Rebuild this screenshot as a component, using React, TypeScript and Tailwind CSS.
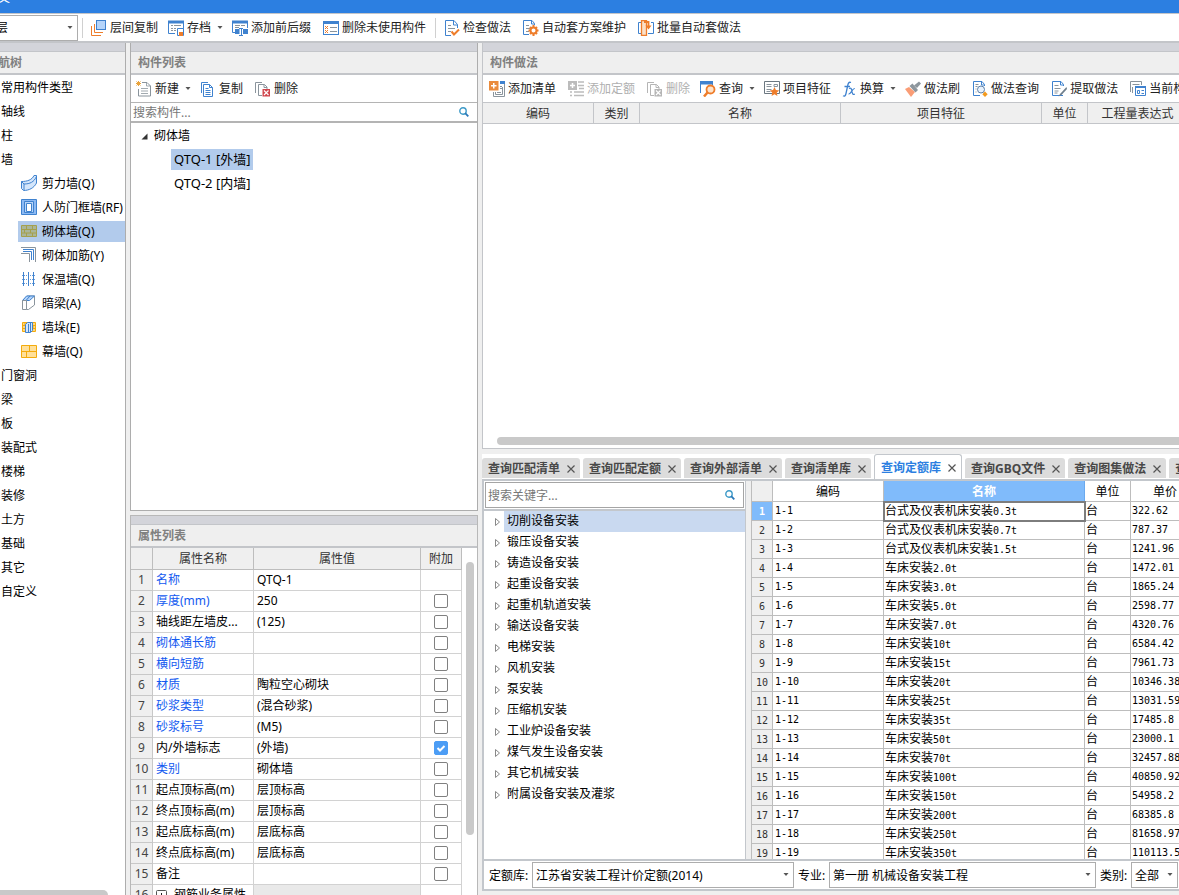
import { useState } from 'react';
import type { ReactNode } from 'react';

const BLUE = '#3f82cf';
const ORANGE = '#ee7d2b';
const GRAY = '#8a949c';

interface IconProps {
  children: ReactNode;
}

function Icon({ children }: IconProps) {
  return (
    <svg width="16" height="16" viewBox="0 0 16 16" fill="none" className="shrink-0" aria-hidden="true">
      {children}
    </svg>
  );
}

// Icones de la barre principale
const floorCopyIcon = (
  <Icon>
    <path d="M0.5 6v9.5H10M3.5 4v8.5H12" stroke={ORANGE} />
    <rect x="5.5" y="0.5" width="9" height="9" fill="#b5d4fa" stroke={BLUE} />
  </Icon>
);
const archiveIcon = (
  <Icon>
    <path d="M0.5 1v12.500H7M15.5 1v8" stroke={BLUE} />
    <path d="M0 0.500h16v3H0z" fill={BLUE} />
    <path d="M3 5.500h2M6 5.500h7M3 8.500h2M6 8.500h2M3 10.500h2M6 10.500h2" stroke={GRAY} />
    <path d="M9.500 8.500h6v7h-6z" fill="#fff" stroke={BLUE} />
    <path d="M11 12h4v4h-4z" fill={ORANGE} />
  </Icon>
);
const prefixIcon = (
  <Icon>
    <path d="M0.500 1v11.500H3M15.500 1v7" stroke={BLUE} />
    <path d="M0 0.500h15.900v3H0z" fill={BLUE} />
    <path d="M3 5.500h5M9 5.500h4M3 7.500h4" stroke={GRAY} />
    <path d="M3 9h4.500v5H3zM11 9h5v5h-5z" fill={BLUE} />
    <path d="M7 8.500h4M7 15.500h4M9.500 8v8" stroke={BLUE} />
  </Icon>
);
const unusedIcon = (
  <Icon>
    <rect x="0.500" y="1.500" width="15" height="13" fill="#fff" stroke={BLUE} />
    <path d="M0 1h16v3H0z" fill={BLUE} />
    <path d="M2 6l3 3M5 6l-3 3M2 10l3 3M5 10l-3 3" stroke={ORANGE} />
    <path d="M7 7.500h7M7 11.500h7" stroke={GRAY} />
  </Icon>
);
const checkDocIcon = (
  <Icon>
    <path d="M13.500 8V4.500L10 0.500H1.500v15H7M9.500 1v4h4" stroke={BLUE} />
    <path d="M4 5.500h3M4 8.500h7M4 11.500h3" stroke={GRAY} />
    <path d="M7.500 11.500l2.500 3 5-5" stroke={ORANGE} strokeWidth="2" />
  </Icon>
);
const schemeIcon = (
  <Icon>
    <path d="M11.500 5V3.500L9 0.500H0.500v14H6M8.500 1v3h3" stroke={BLUE} />
    <path d="M3 5.500h3M3 8.500h4M3 11.500h3" stroke={GRAY} />
    <circle cx="10.500" cy="10.500" r="3" stroke={ORANGE} strokeWidth="2" />
    <path d="M10.500 5v2M10.500 14v2M5.500 10.500h2M13.500 10.500h2M7 7l1 1M14 7l-1 1M7 14l1-1M14 14l-1-1" stroke={ORANGE} strokeWidth="2" />
  </Icon>
);
const batchIcon = (
  <Icon>
    <path d="M3 2.500H0.500v11H3M13 2.500h2.500v11H10" stroke={BLUE} />
    <path d="M3.500 0.500h5v15h-5z" fill="#fbe0c8" stroke={ORANGE} strokeWidth="1.300" />
    <path d="M6 2h4.500v4" stroke={ORANGE} strokeWidth="1.800" />
    <path d="M7.500 5.500h6l-3 4z" fill={ORANGE} />
  </Icon>
);

// Icones de la liste des composants
const newIcon = (
  <Icon>
    <path d="M6 1.500h5L14.500 5v10h-12V8" stroke={GRAY} />
    <path d="M10.500 1.500V5h4M5 7.500h7M5 10h7M5 12.500h7" stroke={GRAY} strokeWidth="0.800" />
    <path d="M2.500 0v5M0 2.500h5M0.500 0.500l4 4M4.500 0.500l-4 4" stroke="#e9a33b" />
  </Icon>
);
const copyIcon = (
  <Icon>
    <path d="M1.500 12V1.500H8" stroke={BLUE} />
    <path d="M3.500 3.500h6l3 3v9h-9z" fill="#fff" stroke={BLUE} />
    <path d="M9.500 3.500v3h3M5.500 7.500h3M5.500 9.500h5M5.500 11.500h5M5.500 13.500h5" stroke={BLUE} />
  </Icon>
);

function DeleteIcon({ color, cross }: { color: string; cross: string }) {
  return (
    <Icon>
      <path d="M0.500 12V1.500H7M7 14.500H3.500v-11h6L12 6v2" stroke={color} />
      <path d="M9 3.500v3h3" stroke={color} />
      <path d="M7.500 8H15v7.500H7.500z" fill={cross} />
      <path d="M9 9.500l4.500 4.500M13.500 9.500L9 14" stroke="#fff" strokeWidth="1.200" />
    </Icon>
  );
}

// Icones de la barre des ouvrages
const addListIcon = (
  <Icon>
    <path d="M11 0h5v3h-5z" fill={BLUE} />
    <path d="M15.500 3v12.500H4.500V11M6.500 11v2.500h7V6" stroke={GRAY} />
    <path d="M11 5.500h2M11 7.500h2M8 11.500h4" stroke={GRAY} />
    <path d="M0 0h9.500v9.500H0z" fill="#ea8b3c" />
    <path d="M4.750 2v5.500M2 4.750h5.500" stroke="#fff" strokeWidth="1.500" />
  </Icon>
);
const addQuotaIcon = (
  <Icon>
    <path d="M0 0h9v9H0z" fill="#bcbcbc" />
    <path d="M4.500 2v5M2 4.500h5" stroke="#fff" strokeWidth="1.500" />
    <path d="M10 1h6M10 4.500h6M11 7.500h5M6 11h10M6 14.500h10M2 11h2M2 14.500h2" stroke="#bcbcbc" strokeWidth="1.500" />
  </Icon>
);
const queryIcon = (
  <Icon>
    <path d="M0.500 12V1M12.500 1v3" stroke={BLUE} />
    <path d="M0 0h13v3.500H0z" fill={BLUE} />
    <circle cx="10.500" cy="8.500" r="4" fill="#fde3cb" stroke={ORANGE} strokeWidth="1.800" />
    <path d="M7.500 11.500L4 15.500" stroke={ORANGE} strokeWidth="2.500" />
  </Icon>
);
const featureIcon = (
  <Icon>
    <path d="M0.500 0.500h15v12H0.500z" fill="#fff" stroke="#6b7780" />
    <path d="M2.500 3.500h5M2.500 5.500h5M2.500 8.500h5M2.500 10.500h4M10 3.500h3.500v2H10z" stroke={GRAY} />
    <path d="M10.500 6l1.400 3 3.300.4-2.400 2.200.6 3.400-2.900-1.700-2.900 1.700.6-3.400-2.400-2.200 3.300-.4z" fill={ORANGE} />
  </Icon>
);
const fxIcon = (
  <Icon>
    <path d="M10 1.500C7.500 0.500 7 3 6.500 5.500L5 12.500C4.500 15 3.500 15.500 2 14.700M3.500 5.500h5.500" stroke={BLUE} strokeWidth="1.300" />
    <path d="M8 7.500c2-1 2.500 0 3 3s1.200 3.500 2.800 2.500M13.800 7.500C11.500 7 10 13.500 7.500 13" stroke={BLUE} strokeWidth="1.200" />
  </Icon>
);
const brushIcon = (
  <Icon>
    <path d="M0 8l4-2 6 5-4 5z" fill="#fa9d76" />
    <path d="M4.500 5l3-2.500L13 9l-2.500 2.500z" fill="#8d969d" />
    <path d="M9 4.500l5-4 2 2-4 4.500z" fill="#8d969d" />
  </Icon>
);
const workQueryIcon = (
  <Icon>
    <path d="M12.500 5V3.500L10 0.500H1.500v14H8M9.500 1v3h3" stroke={BLUE} />
    <path d="M3.500 3.500h3M3.500 5.500h2M3.500 8h1M3.500 11h1" stroke={GRAY} />
    <circle cx="9" cy="8.500" r="3.500" fill="#e8f2fd" stroke="#5b7fa8" />
    <path d="M13 10.500l2.700 2.700-2.700 2.700-2.700-2.700z" fill="#f39a1e" />
  </Icon>
);
const extractIcon = (
  <Icon>
    <path d="M12.500 5V3.500L10 0.500H1.500v14H12M9.500 1v3h3" stroke={BLUE} />
    <path d="M3.500 4.500h4M3.500 7.500h6M3.500 10h4M3.500 12h3" stroke={GRAY} />
    <path d="M15.500 6L9 13l-1.500 2.500L10.500 14 16 8z" fill="#6f7f8c" />
  </Icon>
);
const currentIcon = (
  <Icon>
    <path d="M0.500 11V0.500h11V4M2.500 3.500h7M2.500 6v6" stroke={GRAY} />
    <path d="M5.500 5.500h10v9h-10z" fill="#fff" stroke={BLUE} />
    <path d="M5 5h11v2H5z" fill={BLUE} />
    <path d="M7.500 9.500h2v3h-2zM11.500 9.500H14M11.500 12.500H14" stroke={BLUE} />
  </Icon>
);

// Icones de l'arborescence des murs
const shearIcon = (
  <Icon>
    <path d="M0.500 6.500C6 6.500 11 5 13 0.500h2.500V8C13 13 8 15.500 2.500 15.500l-2-2z" fill="#d4e6fb" stroke={BLUE} />
    <path d="M0.500 6.500L3 9c6 0 10-2 12.500-7.500M3 9v6" stroke={BLUE} />
  </Icon>
);
const frameIcon = (
  <Icon>
    <path d="M0.500 0.500h15v15H0.500z" fill="#8dbaf3" stroke={BLUE} />
    <path d="M3.500 2.500h9v11h-9z" fill="#b9d5f8" stroke={BLUE} />
    <path d="M5.500 4.500h5v8h-5z" fill="#fff" stroke={BLUE} />
  </Icon>
);
const masonryIcon = (
  <Icon>
    <path d="M0.500 2.500h15v11H0.500z" fill="#a9b59a" stroke="#a5a04c" />
    <path d="M0 6.500h16M0 10h16M5.500 2v4.500M11.500 2v4.500M3.500 6.500V10M9.500 6.500V10M5.500 10v4M11.500 10v4" stroke="#a5a04c" />
  </Icon>
);
const rebarIcon = (
  <Icon>
    <path d="M0 0.500h14.500V15M0 6.500h8.500V15" stroke={GRAY} />
    <path d="M2 2.500h10.500V13M2 4.500h8.500V13" stroke={BLUE} />
  </Icon>
);
const insulationIcon = (
  <Icon>
    <path d="M2.500 1v14M7.500 1v14M12.500 1v14" stroke={BLUE} />
    <path d="M1 4.500h14M1 8.500h14M1 12.500h14" stroke={BLUE} strokeDasharray="1 1" opacity="0.800" />
  </Icon>
);
const hiddenBeamIcon = (
  <Icon>
    <path d="M1.500 5.500l5-4.500h7v9l-6 4.500h-2z" fill="#fff" stroke={GRAY} />
    <path d="M1.500 5.500l4-4.500h8l-5 4.500z" fill="#b5d4fa" stroke={BLUE} />
    <path d="M5 5.500l4-4.500" stroke={BLUE} />
    <path d="M1.500 5.500h4v9h-4z" fill="#fff" stroke={GRAY} />
  </Icon>
);
const pierIcon = (
  <Icon>
    <path d="M1.500 3.500h13v9h-13z" fill="#fdd683" stroke="#f3ab0d" />
    <path d="M1 6.500h14M1 9.500h14M4 3v3M12 6.500v3" stroke="#f3ab0d" />
    <path d="M4.500 5.500l2-2h5v8l-2 2h-5z" fill="#d4e6fb" stroke={BLUE} />
    <path d="M7.500 5v8M9.500 4v9" stroke={BLUE} />
  </Icon>
);
const curtainIcon = (
  <Icon>
    <path d="M0.500 2.500h15v12H0.500z" fill="#ffe09a" stroke="#f3ab0d" />
    <path d="M0 8.500h16M8.500 2v6M5.500 8.500v6" stroke="#f3ab0d" />
  </Icon>
);

function SearchIcon() {
  return (
    <svg width="10" height="10" viewBox="0 0 10 10" fill="none" className="shrink-0" aria-hidden="true">
      <circle cx="4" cy="4" r="3.200" stroke="#3d9ac8" strokeWidth="1.400" />
      <path d="M6.200 6.200L9.300 9.300" stroke="#2c78b8" strokeWidth="1.800" />
    </svg>
  );
}

function CaretDown() {
  return (
    <svg width="6" height="4" viewBox="0 0 6 4" className="shrink-0" aria-hidden="true">
      <path d="M0.500 0h5L3 3z" fill="#555" />
    </svg>
  );
}

interface ToolButtonProps {
  icon: ReactNode;
  label: string;
  menu?: boolean;
  disabled?: boolean;
}

function ToolButton({ icon, label, menu, disabled }: ToolButtonProps) {
  return (
    <button
      type="button"
      disabled={disabled}
      className={`flex h-5 shrink-0 items-center gap-[3px] whitespace-nowrap rounded-sm hover:bg-[#e5effb] ${
        menu ? 'pl-0.5 pr-px' : 'px-1'
      } ${disabled ? 'text-[#b0b0b0]' : 'text-[#222]'}`}
    >
      {icon}
      <span>{label}</span>
      {menu && <span className="ml-[3px]"><CaretDown /></span>}
    </button>
  );
}

function PanelTitle({ children }: { children: ReactNode }) {
  return (
    <>
      <div className="h-2 shrink-0 bg-[#d3d4da]" />
      <h2 className="flex h-6 shrink-0 items-center overflow-hidden whitespace-nowrap border-b-2 border-t border-[#c3c5c9] bg-[#efefef] px-[7px] font-bold text-[#808080]">
        {children}
      </h2>
    </>
  );
}

interface ComboProps {
  id: string;
  value: string;
  className: string;
}

function Combo({ id, value, className }: ComboProps) {
  return (
    <div className={`relative h-[26px] shrink-0 ${className}`}>
      <select id={id} aria-label={value} className="h-full w-full appearance-none border border-[#adadad] bg-white pl-[3px] pr-4 pt-px text-black">
        <option>{value}</option>
      </select>
      <span className="pointer-events-none absolute right-[5px] top-[11px]"><CaretDown /></span>
    </div>
  );
}

const wallTypes = [
  { label: '剪力墙(Q)', icon: shearIcon },
  { label: '人防门框墙(RF)', icon: frameIcon },
  { label: '砌体墙(Q)', icon: masonryIcon },
  { label: '砌体加筋(Y)', icon: rebarIcon },
  { label: '保温墙(Q)', icon: insulationIcon },
  { label: '暗梁(A)', icon: hiddenBeamIcon },
  { label: '墙垛(E)', icon: pierIcon },
  { label: '幕墙(Q)', icon: curtainIcon },
];

const navBefore = ['常用构件类型', '轴线', '柱', '墙'];
const navAfter = ['门窗洞', '梁', '板', '装配式', '楼梯', '装修', '土方', '基础', '其它', '自定义'];

interface Property {
  name: string;
  value: string;
  blue?: boolean;
  check?: boolean;
}

const properties: Property[] = [
  { name: '名称', value: 'QTQ-1', blue: true },
  { name: '厚度(mm)', value: '250', blue: true, check: false },
  { name: '轴线距左墙皮...', value: '(125)', check: false },
  { name: '砌体通长筋', value: '', blue: true, check: false },
  { name: '横向短筋', value: '', blue: true, check: false },
  { name: '材质', value: '陶粒空心砌块', blue: true, check: false },
  { name: '砂浆类型', value: '(混合砂浆)', blue: true, check: false },
  { name: '砂浆标号', value: '(M5)', blue: true, check: false },
  { name: '内/外墙标志', value: '(外墙)', check: true },
  { name: '类别', value: '砌体墙', blue: true, check: false },
  { name: '起点顶标高(m)', value: '层顶标高', check: false },
  { name: '终点顶标高(m)', value: '层顶标高', check: false },
  { name: '起点底标高(m)', value: '层底标高', check: false },
  { name: '终点底标高(m)', value: '层底标高', check: false },
  { name: '备注', value: '', check: false },
];

const chapters = [
  '切削设备安装', '锻压设备安装', '铸造设备安装', '起重设备安装', '起重机轨道安装',
  '输送设备安装', '电梯安装', '风机安装', '泵安装', '压缩机安装', '工业炉设备安装',
  '煤气发生设备安装', '其它机械安装', '附属设备安装及灌浆',
];

// [nom, taille, prix]
const quotas: [string, string, string][] = [
  ['台式及仪表机床安装', '0.3t', '322.62'],
  ['台式及仪表机床安装', '0.7t', '787.37'],
  ['台式及仪表机床安装', '1.5t', '1241.96'],
  ['车床安装', '2.0t', '1472.01'],
  ['车床安装', '3.0t', '1865.24'],
  ['车床安装', '5.0t', '2598.77'],
  ['车床安装', '7.0t', '4320.76'],
  ['车床安装', '10t', '6584.42'],
  ['车床安装', '15t', '7961.73'],
  ['车床安装', '20t', '10346.38'],
  ['车床安装', '25t', '13031.59'],
  ['车床安装', '35t', '17485.8'],
  ['车床安装', '50t', '23000.1'],
  ['车床安装', '70t', '32457.88'],
  ['车床安装', '100t', '40850.92'],
  ['车床安装', '150t', '54958.2'],
  ['车床安装', '200t', '68385.8'],
  ['车床安装', '250t', '81658.97'],
  ['车床安装', '350t', '110113.5'],
];

const tabs = ['查询匹配清单', '查询匹配定额', '查询外部清单', '查询清单库', '查询定额库', '查询GBQ文件', '查询图集做法', '查询'];

function NavTree() {
  const [selected, setSelected] = useState('砌体墙(Q)');

  return (
    <nav className="flex w-[126px] shrink-0 flex-col overflow-hidden border-r border-[#adadad] bg-white">
      <PanelTitle><span className="-ml-[9px]">航树</span></PanelTitle>
      <ul className="min-h-0 flex-1 overflow-hidden">
        {navBefore.map(item => (
          <li key={item} className="flex h-6 items-center pl-px pt-0.5">{item}</li>
        ))}
        {wallTypes.map(({ label, icon }) => (
          <li key={label} className="flex h-6 items-center pl-[18px]">
            <button
              type="button"
              onClick={() => setSelected(label)}
              className={`flex h-[21px] flex-1 items-center gap-[5px] whitespace-nowrap pl-[3px] ${
                selected === label ? 'bg-[#b2cbec]' : ''
              }`}
            >
              {icon}
              <span className="pt-0.5">{label}</span>
            </button>
          </li>
        ))}
        {navAfter.map(item => (
          <li key={item} className="flex h-6 items-center pl-px pt-0.5">{item}</li>
        ))}
      </ul>
      <div className="mr-[17px] h-[5px] shrink-0 rounded-tr-full bg-[#c9c9c9]" />
    </nav>
  );
}

function ComponentList() {
  return (
    <section className="flex min-h-0 flex-[468] flex-col border border-t-0 border-[#adadad] bg-white">
      <PanelTitle>构件列表</PanelTitle>
      <div className="flex h-[27px] shrink-0 items-center gap-1 pl-[3px]">
        <ToolButton icon={newIcon} label="新建" menu />
        <ToolButton icon={copyIcon} label="复制" />
        <ToolButton icon={<DeleteIcon color={GRAY} cross="#d0454c" />} label="删除" />
      </div>
      <div className="flex h-[21px] shrink-0 items-center border-b-2 border-t border-[#b4b4b4] pl-0.5 pr-2">
        <input aria-label="搜索构件" placeholder="搜索构件..." className="min-w-0 flex-1 pt-0.5 outline-none placeholder:text-[#777]" />
        <button type="button" aria-label="搜索"><SearchIcon /></button>
      </div>
      <ul className="min-h-0 flex-1 overflow-hidden">
        <li className="flex h-6 items-center gap-1.5 pl-2.5 pt-0.5">
          <svg width="7" height="7" viewBox="0 0 7 7" aria-hidden="true"><path d="M6.500 0.500v6h-6z" fill="#333" /></svg>
          砌体墙
        </li>
        <li className="flex h-6 items-center pl-10 text-[13px]">
          <span className="flex h-[21px] items-center bg-[#b2cbec] px-[3px]">QTQ-1 [外墙]</span>
        </li>
        <li className="flex h-6 items-center pl-10 text-[13px]">
          <span className="flex h-[21px] items-center px-[3px]">QTQ-2 [内墙]</span>
        </li>
      </ul>
    </section>
  );
}

function PropertyList() {
  const [checks, setChecks] = useState(properties.map(p => !!p.check));

  const toggle = (index: number) => {
    setChecks(prev => prev.map((c, i) => (i === index ? !c : c)));
  };

  const head = 'h-[22px] border-b border-r border-[#bdbdbd] bg-[#efefef] p-0 font-normal text-[#333]';
  const index = 'h-[21px] border-b border-r border-[#c8c8c8] bg-[#efefef] p-0 text-center font-normal text-[#444]';
  const cell = 'h-[21px] whitespace-nowrap border-b border-r border-[#d2d2d2] py-0 px-[3px]';

  return (
    <section className="flex min-h-0 flex-[379] flex-col border-x border-t border-[#b8b8b8] bg-white">
      <PanelTitle>属性列表</PanelTitle>
      <div className="flex min-h-0 flex-1 overflow-hidden">
        <table className="h-0 min-w-0 flex-1 table-fixed border-separate border-spacing-0">
          <colgroup>
            <col className="w-[22px]" />
            <col className="w-[101px]" />
            <col />
            <col className="w-[41px]" />
          </colgroup>
          <thead>
            <tr>
              <th className={head} />
              <th className={head}>属性名称</th>
              <th className={head}>属性值</th>
              <th className={head}>附加</th>
            </tr>
          </thead>
          <tbody>
            {properties.map((p, i) => (
              <tr key={p.name}>
                <th className={index}>{i + 1}</th>
                <td className={`${cell} ${p.blue ? 'text-[#1259f0]' : ''}`}>{p.name}</td>
                <td className={cell}>{p.value}</td>
                <td className={`${cell} pt-[3px] align-top`}>
                  {p.check !== undefined && (
                    <label className="relative mx-auto block size-3.5">
                      <input
                        type="checkbox"
                        aria-label={p.name}
                        checked={checks[i]}
                        onChange={() => toggle(i)}
                        className="block size-3.5 appearance-none rounded-[2px] border border-[#808080] bg-white checked:border-[#4c9df5] checked:bg-[#4c9df5]"
                      />
                      {checks[i] && (
                        <svg viewBox="0 0 14 14" fill="none" className="pointer-events-none absolute inset-0" aria-hidden="true">
                          <path d="M3.500 7l2.500 2.500L10.500 5" stroke="#fff" strokeWidth="2" />
                        </svg>
                      )}
                    </label>
                  )}
                </td>
              </tr>
            ))}
            <tr>
              <th className={index}>16</th>
              <td className={cell}>
                <span className="flex items-center gap-[7px]">
                  <svg width="11" height="11" viewBox="0 0 11 11" fill="none" className="shrink-0" aria-hidden="true">
                    <rect x="0.500" y="0.500" width="10" height="10" rx="1" stroke="#555" />
                    <path d="M5.500 3v5M3 5.500h5" stroke="#222" />
                  </svg>
                  钢筋业务属性
                </span>
              </td>
              <td className={`${cell} bg-[#e9e9e9]`} />
              <td className={cell} />
            </tr>
          </tbody>
        </table>
        <div className="w-[15px] shrink-0 pl-1 pt-3.5">
          <div className="h-[82%] w-2 rounded-full bg-[#c9c9c9]" />
        </div>
      </div>
    </section>
  );
}

function WorkList() {
  const head = 'h-[22px] border-b border-r border-t border-[#c3c5c9] bg-[#efefef] p-0 pt-0.5 font-normal text-[#333]';

  return (
    <section className="flex min-h-0 flex-[405] flex-col overflow-hidden border-b border-l border-[#c3c5c9] bg-white">
      <PanelTitle>构件做法</PanelTitle>
      <div className="flex h-[27px] shrink-0 items-center gap-1 pl-0.5">
        <ToolButton icon={addListIcon} label="添加清单" />
        <ToolButton icon={addQuotaIcon} label="添加定额" disabled />
        <ToolButton icon={<DeleteIcon color="#b5b5b5" cross="#b5b5b5" />} label="删除" disabled />
        <ToolButton icon={queryIcon} label="查询" menu />
        <ToolButton icon={featureIcon} label="项目特征" />
        <ToolButton icon={fxIcon} label="换算" menu />
        <ToolButton icon={brushIcon} label="做法刷" />
        <ToolButton icon={workQueryIcon} label="做法查询" />
        <ToolButton icon={extractIcon} label="提取做法" />
        <ToolButton icon={currentIcon} label="当前构件" />
      </div>
      <div className="min-h-0 flex-1 overflow-hidden">
        <table className="w-full table-fixed border-separate border-spacing-0">
          <colgroup>
            <col className="w-[111px]" />
            <col className="w-[46px]" />
            <col className="w-[201px]" />
            <col className="w-[201px]" />
            <col className="w-[46px]" />
            <col />
          </colgroup>
          <thead>
            <tr>
              <th className={head}>编码</th>
              <th className={head}>类别</th>
              <th className={head}>名称</th>
              <th className={head}>项目特征</th>
              <th className={head}>单位</th>
              <th className="h-[22px] whitespace-nowrap border-b border-t border-[#c3c5c9] bg-[#efefef] p-0 pl-2 pt-0.5 font-normal text-[#333]">
                工程量表达式
              </th>
            </tr>
          </thead>
        </table>
      </div>
      <div className="mb-[3px] ml-3.5 h-2 shrink-0 rounded-l-full bg-[#c9c9c9]" />
    </section>
  );
}

function QuotaTable() {
  const head = 'h-[21px] border-b border-r border-[#bdbdbd] p-0 pt-0.5 font-normal text-black';
  const cell = 'h-[19px] whitespace-nowrap border-b border-r border-[#bdbdbd] bg-white py-0 px-px leading-4';
  const mono = 'font-["DejaVu_Sans_Mono",monospace] text-[10px]';

  return (
    <div className="min-w-0 flex-1 overflow-hidden border-l border-[#bdbdbd]">
      <table className="w-[448px] min-w-full table-fixed border-separate border-spacing-0">
        <colgroup>
          <col className="w-[21px]" />
          <col className="w-[111px]" />
          <col className="w-[201px]" />
          <col className="w-[46px]" />
          <col />
        </colgroup>
        <thead>
          <tr>
            <th className={`${head} bg-[#efefef]`} />
            <th className={`${head} bg-white`}>编码</th>
            <th className="h-[21px] border-b border-r border-[#6aa9ee] bg-[#80bbfb] p-0 pt-0.5 font-bold text-white">名称</th>
            <th className={`${head} bg-white`}>单位</th>
            <th className={`${head} bg-white`}>单价</th>
          </tr>
        </thead>
        <tbody>
          {quotas.map(([name, size, price], i) => (
            <tr key={i}>
              <th
                className={`h-[19px] border-b border-r border-[#bdbdbd] p-0 pt-0.5 leading-4 ${mono} ${
                  i === 0 ? 'bg-[#80bbfb] font-bold text-white' : 'bg-[#efefef] font-normal text-[#333]'
                }`}
              >
                {i + 1}
              </th>
              <td className={`${cell} ${mono} pl-0.5`}>1-{i + 1}</td>
              <td className={`${cell} ${i === 0 ? 'outline-2 -outline-offset-1 outline-[#7d7d7d]' : ''}`}>
                {name}<span className={mono}>{size}</span>
              </td>
              <td className={cell}>台</td>
              <td className={`${cell} ${mono}`}>{price}</td>
            </tr>
          ))}
        </tbody>
      </table>
    </div>
  );
}

function QueryPanel() {
  const [tab, setTab] = useState(4);
  const [chapter, setChapter] = useState(0);

  return (
    <section className="flex min-h-0 flex-[437] flex-col overflow-hidden pb-1">
      <div className="flex h-[25px] shrink-0 items-end gap-[3px] bg-white" role="tablist">
        {tabs.map((label, i) => (
          <button
            key={label}
            type="button"
            role="tab"
            aria-selected={tab === i}
            onClick={() => setTab(i)}
            className={`flex shrink-0 items-center gap-1.5 whitespace-nowrap rounded-t-[3px] pl-1.5 pr-1 pt-0.5 font-bold ${
              tab === i
                ? 'h-[25px] border border-b-0 border-[#c3c7cc] bg-white text-[#2c7fe1]'
                : 'mb-px h-5 bg-[#dcdcdc] text-[#484848]'
            }`}
          >
            {label}
            <svg width="10" height="10" viewBox="0 0 10 10" fill="none" aria-hidden="true">
              <path d="M1.500 1.500l7 7M8.500 1.500l-7 7" stroke="#555" strokeWidth="1.200" />
            </svg>
          </button>
        ))}
      </div>
      <div className="flex min-h-0 flex-1 flex-col border-y-2 border-l-2 border-[#c3c7cc] bg-white">
        <div className="flex min-h-0 flex-1 bg-[#efefef]">
          <div className="flex w-[262px] shrink-0 flex-col overflow-hidden border-r border-[#c3c7cc] bg-white">
            <div className="border-b-2 border-[#c3c7cc] p-px">
              <div className="flex h-[26px] items-center border border-[#a5a5a5] pl-0.5 pr-2">
                <input aria-label="搜索关键字" placeholder="搜索关键字..." className="min-w-0 flex-1 pt-0.5 outline-none placeholder:text-[#777]" />
                <button type="button" aria-label="搜索"><SearchIcon /></button>
              </div>
            </div>
            <ul className="min-h-0 flex-1 overflow-hidden">
              {chapters.map((label, i) => (
                <li key={label} className="flex h-[21px] items-center">
                  <svg width="20" height="10" viewBox="0 0 20 10" fill="none" className="shrink-0" aria-hidden="true">
                    <path d="M11.500 1.500v7l4-3.500z" stroke="#888" />
                  </svg>
                  <button
                    type="button"
                    onClick={() => setChapter(i)}
                    className={`flex h-full flex-1 items-center pb-0.5 pl-[3px] ${chapter === i ? 'bg-[#c9d9f0]' : ''}`}
                  >
                    {label}
                  </button>
                </li>
              ))}
            </ul>
          </div>
          <div className="w-[5px] shrink-0" />
          <QuotaTable />
        </div>
        <div className="flex h-[30px] shrink-0 items-center overflow-hidden whitespace-nowrap border-t-2 border-[#c3c7cc] pl-[5px]">
          <label htmlFor="library" className="w-[43px] shrink-0 pt-0.5">定额库:</label>
          <Combo id="library" value="江苏省安装工程计价定额(2014)" className="w-[262px]" />
          <label htmlFor="major" className="w-[35px] shrink-0 pl-1 pt-0.5">专业:</label>
          <Combo id="major" value="第一册 机械设备安装工程" className="w-[267px]" />
          <label htmlFor="category" className="w-[35px] shrink-0 pl-1 pt-0.5">类别:</label>
          <Combo id="category" value="全部" className="w-[47px]" />
        </div>
      </div>
    </section>
  );
}

export default function App() {
  return (
    <div className="flex h-screen flex-col overflow-hidden bg-[#efefef] font-['Noto_Sans','Noto_Sans_CJK_SC',sans-serif] text-xs leading-4 text-black">
      <header className="flex h-[13px] shrink-0 items-end overflow-hidden bg-[#2c7fe1] text-white">
        <span className="-ml-0.5 pb-1.5">义</span>
      </header>
      <div className="flex h-[30px] shrink-0 items-center gap-1 overflow-hidden border-b-2 border-t border-[#c3c5c9] bg-white">
        <div className="-ml-2 w-[86px] shrink-0">
          <Combo id="floor" value="层" className="w-full" />
        </div>
        <div className="h-5 w-px bg-[#d0d0d0]" />
        <ToolButton icon={floorCopyIcon} label="层间复制" />
        <ToolButton icon={archiveIcon} label="存档" menu />
        <ToolButton icon={prefixIcon} label="添加前后缀" />
        <ToolButton icon={unusedIcon} label="删除未使用构件" />
        <div className="ml-px h-5 w-px bg-[#d0d0d0]" />
        <ToolButton icon={checkDocIcon} label="检查做法" />
        <ToolButton icon={schemeIcon} label="自动套方案维护" />
        <ToolButton icon={batchIcon} label="批量自动套做法" />
      </div>
      <main className="flex min-h-0 flex-1 gap-1">
        <NavTree />
        <div className="flex w-[348px] shrink-0 flex-col gap-1">
          <ComponentList />
          <PropertyList />
        </div>
        <div className="flex min-w-0 flex-1 flex-col gap-[5px]">
          <WorkList />
          <QueryPanel />
        </div>
      </main>
    </div>
  );
}
